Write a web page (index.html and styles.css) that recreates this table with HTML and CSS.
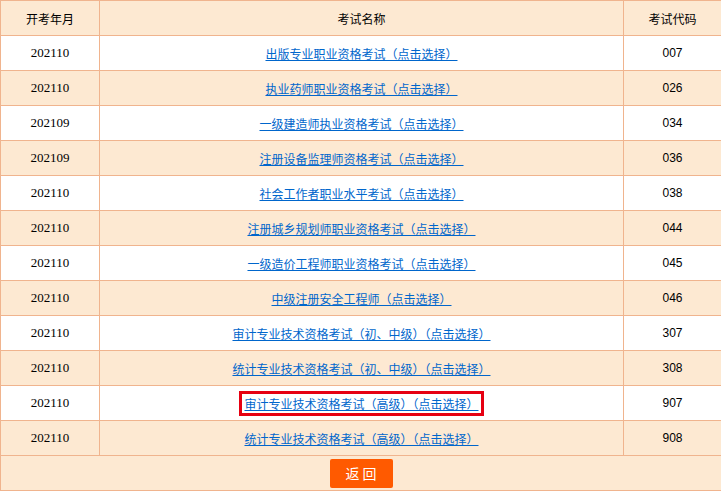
FILE: index.html
```html
<!DOCTYPE html>
<html lang="zh-CN">
<head>
    <meta charset="UTF-8">
    <meta name="viewport" content="width=device-width, initial-scale=1.0">
    <title>考试选择</title>
    <link rel="stylesheet" href="styles.css">
</head>
<body>
    <table class="exam-table">
        <colgroup>
            <col class="col-date">
            <col class="col-name">
            <col class="col-code">
        </colgroup>
        <tr class="head">
            <th>开考年月</th>
            <th>考试名称</th>
            <th>考试代码</th>
        </tr>
        <tr>
            <td class="date">202110</td>
            <td><a href="#">出版专业职业资格考试（点击选择）</a></td>
            <td class="code">007</td>
        </tr>
        <tr class="alt">
            <td class="date">202110</td>
            <td><a href="#">执业药师职业资格考试（点击选择）</a></td>
            <td class="code">026</td>
        </tr>
        <tr>
            <td class="date">202109</td>
            <td><a href="#">一级建造师执业资格考试（点击选择）</a></td>
            <td class="code">034</td>
        </tr>
        <tr class="alt">
            <td class="date">202109</td>
            <td><a href="#">注册设备监理师资格考试（点击选择）</a></td>
            <td class="code">036</td>
        </tr>
        <tr>
            <td class="date">202110</td>
            <td><a href="#">社会工作者职业水平考试（点击选择）</a></td>
            <td class="code">038</td>
        </tr>
        <tr class="alt">
            <td class="date">202110</td>
            <td><a href="#">注册城乡规划师职业资格考试（点击选择）</a></td>
            <td class="code">044</td>
        </tr>
        <tr>
            <td class="date">202110</td>
            <td><a href="#">一级造价工程师职业资格考试（点击选择）</a></td>
            <td class="code">045</td>
        </tr>
        <tr class="alt">
            <td class="date">202110</td>
            <td><a href="#">中级注册安全工程师（点击选择）</a></td>
            <td class="code">046</td>
        </tr>
        <tr>
            <td class="date">202110</td>
            <td><a href="#">审计专业技术资格考试（初、中级）（点击选择）</a></td>
            <td class="code">307</td>
        </tr>
        <tr class="alt">
            <td class="date">202110</td>
            <td><a href="#">统计专业技术资格考试（初、中级）（点击选择）</a></td>
            <td class="code">308</td>
        </tr>
        <tr>
            <td class="date">202110</td>
            <td><a href="#" class="picked">审计专业技术资格考试（高级）（点击选择）</a></td>
            <td class="code">907</td>
        </tr>
        <tr class="alt">
            <td class="date">202110</td>
            <td><a href="#">统计专业技术资格考试（高级）（点击选择）</a></td>
            <td class="code">908</td>
        </tr>
        <tr class="alt">
            <td colspan="3" class="actions"><button class="back">返 回</button></td>
        </tr>
    </table>
</body>
</html>
```

FILE: styles.css
```css
body {
    margin: 0;
    padding: 0;
    background: #fff;
    font-family: "Noto Sans CJK SC", sans-serif;
    font-size: 12px;
}
.exam-table {
    width: 721px;
    border-collapse: collapse;
    table-layout: fixed;
}
.col-date {
    width: 99px;
}
.col-name {
    width: 524px;
}
.col-code {
    width: 98px;
}
.exam-table th,
.exam-table td {
    border: 1px solid #f0b48e;
    height: 34px;
    padding: 0;
    text-align: center;
    font-weight: normal;
    color: #000;
}
.head th {
    background: #fde9d2;
}
.alt td {
    background: #fde9d2;
}
.date {
    font-family: "Liberation Serif", serif;
    font-size: 13px;
}
.code {
    font-family: "Liberation Sans", sans-serif;
    font-size: 12px;
}
.exam-table a {
    color: #0066cc;
    text-decoration: underline;
}
.exam-table a.picked {
    display: inline-block;
    border: 3px solid #e60012;
    padding: 0 2px;
    line-height: 19px;
}
.actions {
    padding: 0;
}
.back {
    background: #ff5a00;
    color: #fff;
    border: none;
    border-radius: 2px;
    width: 63px;
    height: 29px;
    font-family: "Noto Sans CJK SC", sans-serif;
    font-size: 14px;
    cursor: pointer;
    vertical-align: middle;
}
```
